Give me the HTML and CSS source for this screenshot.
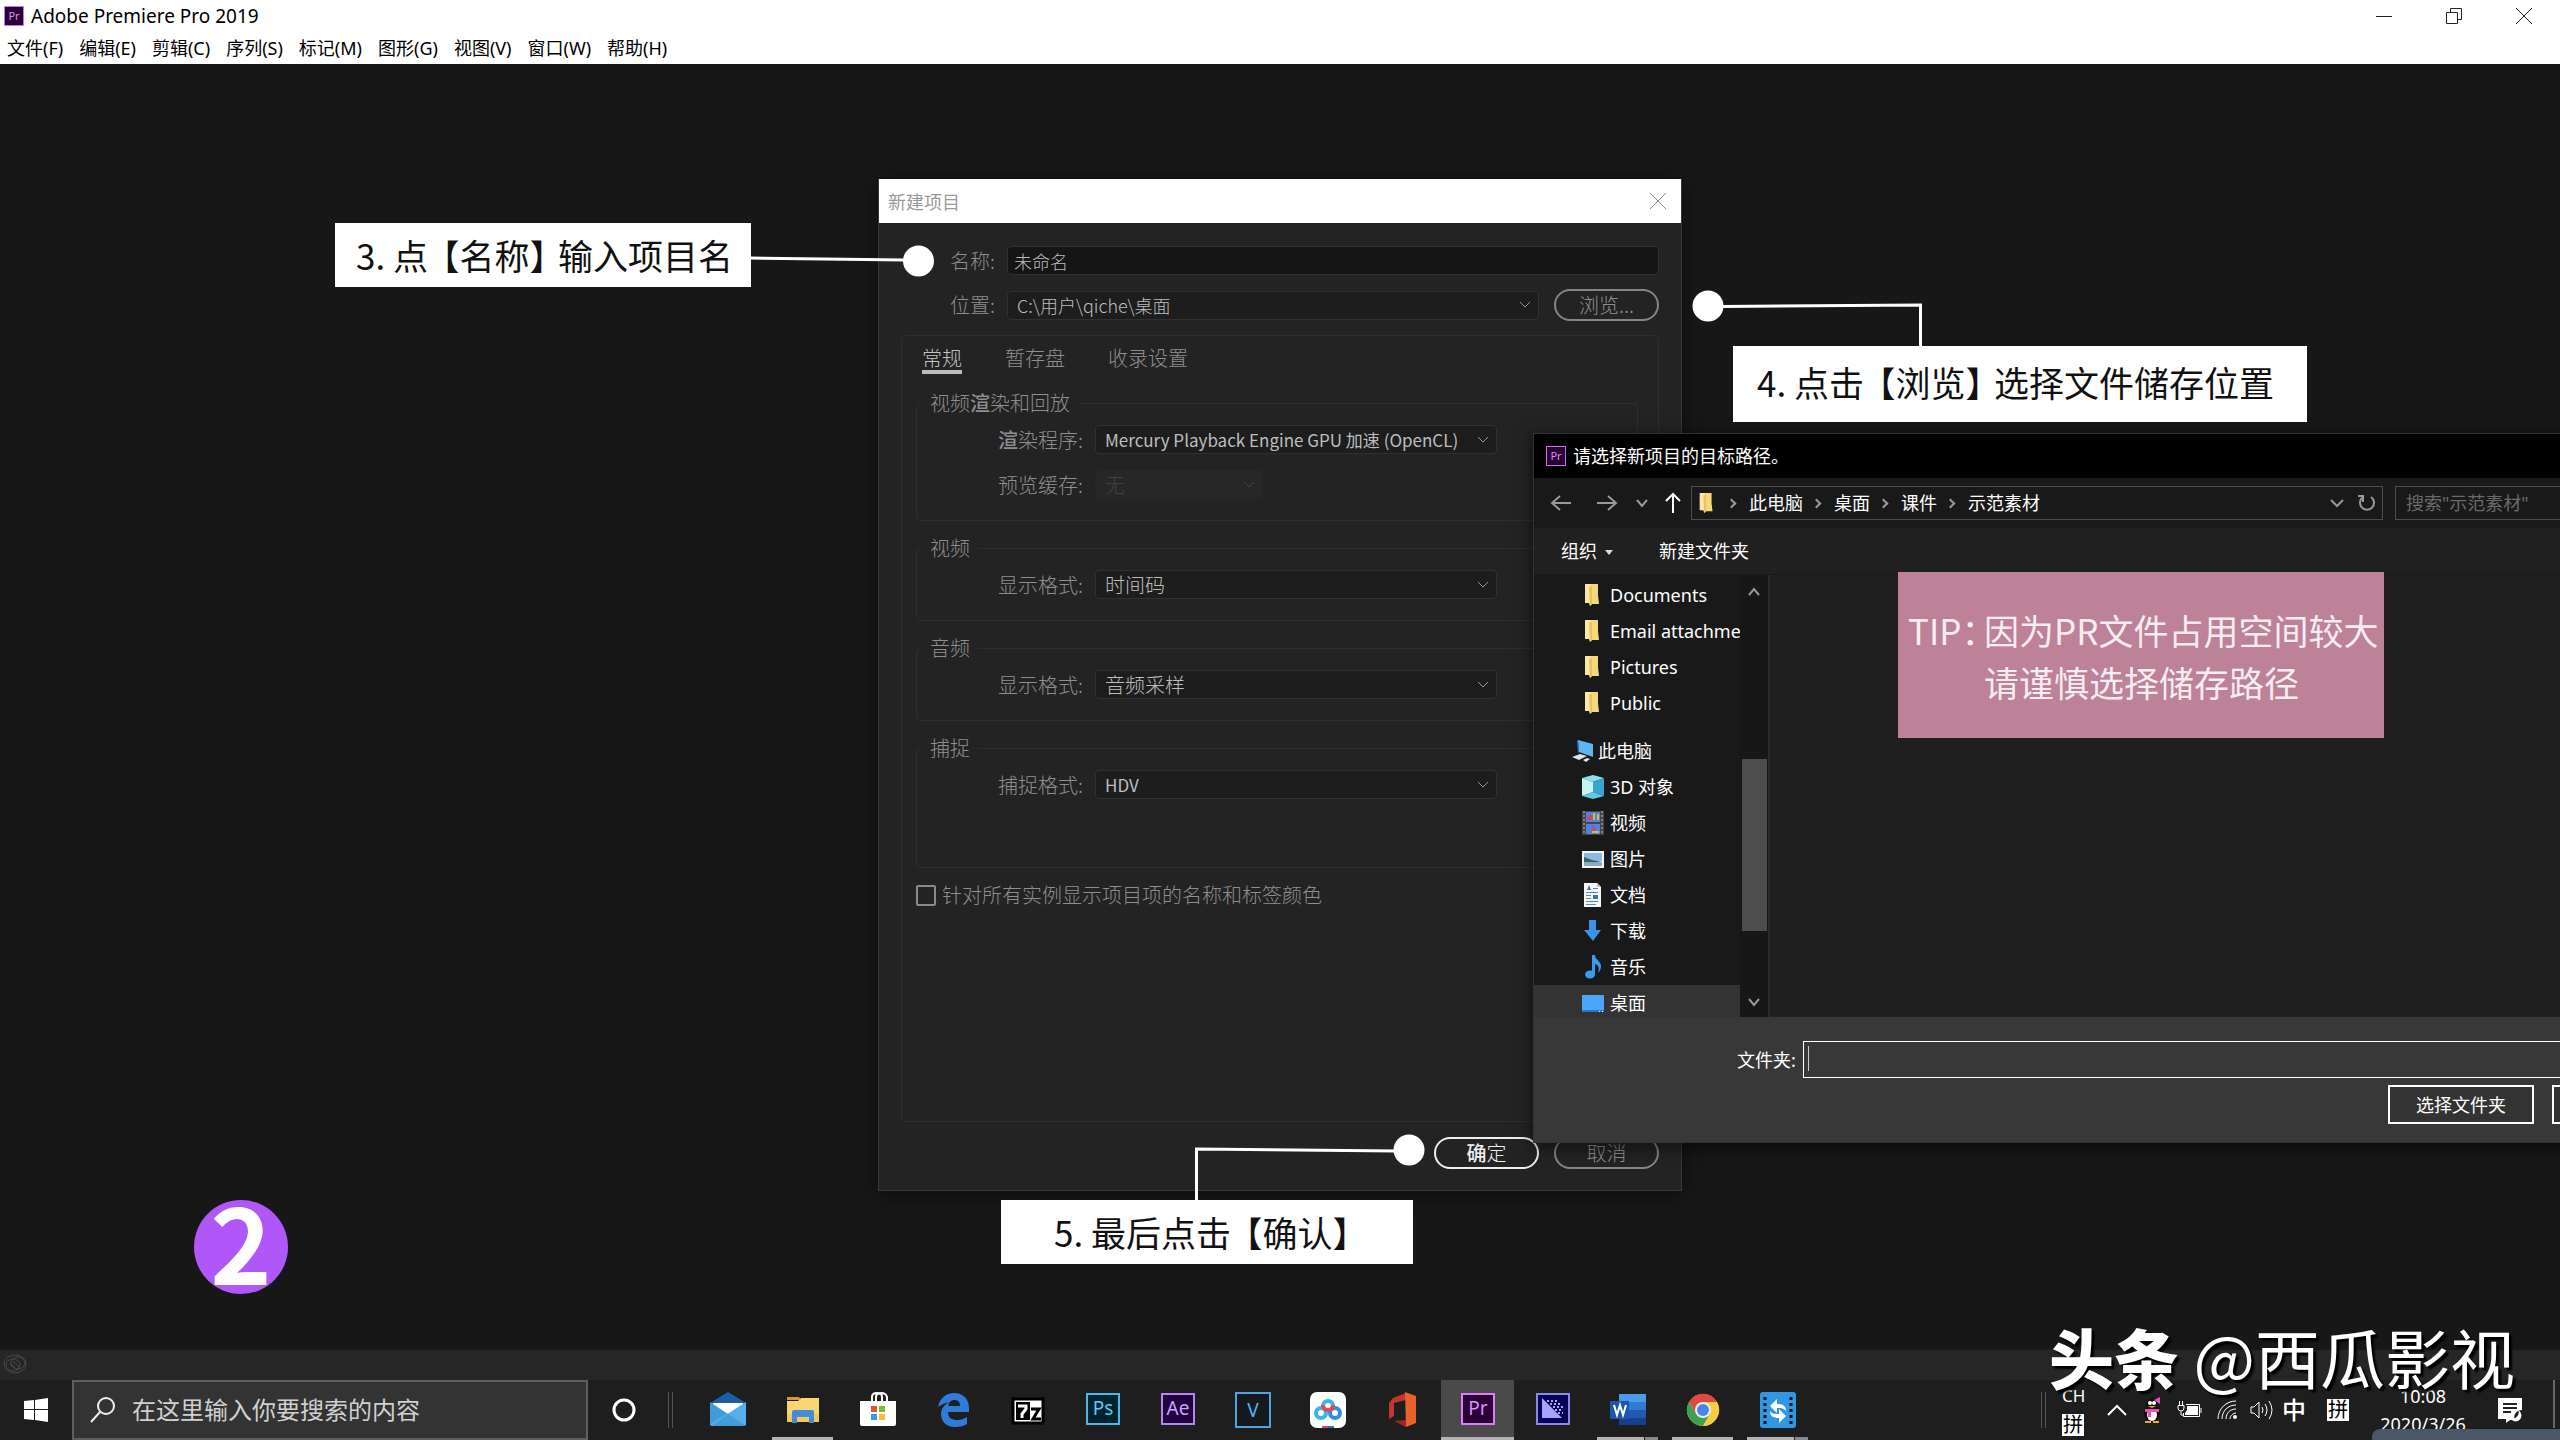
FILE: index.html
```html
<!DOCTYPE html>
<html lang="zh-CN">
<head>
<meta charset="utf-8">
<title>Adobe Premiere Pro 2019</title>
<link rel="stylesheet" href="styles.css">
</head>
<body>
<svg class="defs" width="0" height="0" aria-hidden="true">
  <defs>
    <symbol id="folder" viewBox="0 0 22 24"><g stroke="none"><path fill="#fbe8a6" d="M3 1h8v19l-3 3-1-3H3z"/><path fill="#e8c55c" d="M7 4l4-3v19l-3 3z"/><path fill="#f6d77c" d="M8 1h8v11l1 9H10V4z"/></g></symbol>
    <symbol id="pr" viewBox="0 0 20 20"><path fill="#2a0034" stroke="#c07be8" d="M.5.5h19v19H.5z"/><text x="10" y="14" text-anchor="middle" font-size="11" font-family="Noto Sans, sans-serif" fill="#d98cff">Pr</text></symbol>
  </defs>
</svg>
<div class="screen">
  <header class="titlebar">
    <svg class="app-icon" viewBox="0 0 20 20"><use href="#pr"/></svg>
    <h1>Adobe Premiere Pro 2019</h1>
    <div class="window-controls">
      <button aria-label="最小化"><svg viewBox="0 0 16 16"><path d="M0 8.500h16"/></svg></button>
      <button aria-label="还原"><svg viewBox="0 0 16 16"><path d="M.5 4.500h11v11H.5zM4.500 4V.5h11v11H12"/></svg></button>
      <button aria-label="关闭"><svg viewBox="0 0 16 16"><path d="M0 0l16 16M16 0L0 16"/></svg></button>
    </div>
  </header>
  <nav class="menubar">
    <button>文件(F)</button><button>编辑(E)</button><button>剪辑(C)</button><button>序列(S)</button><button>标记(M)</button><button>图形(G)</button><button>视图(V)</button><button>窗口(W)</button><button>帮助(H)</button>
  </nav>
  <main class="workspace"></main>
  <div class="statusbar">
    <svg width="26" height="20" viewBox="0 0 26 20"><g fill="none" stroke="#484848" stroke-width="1"><ellipse cx="12" cy="10" rx="11" ry="9"/><ellipse cx="10" cy="11" rx="7" ry="6"/><ellipse cx="15" cy="9" rx="7" ry="6"/><path d="M7 9l7 7M10 7l7 7"/></g></svg>
  </div>

  <section class="project-dialog">
    <div class="project-title"><h2>新建项目</h2>
      <button aria-label="关闭"><svg width="16" height="16" viewBox="0 0 16 16"><path d="M0 0l16 16M16 0L0 16"/></svg></button>
    </div>
    <form class="project-body">
      <div class="project-form">
        <label for="name">名称:</label><input id="name" class="name-input" type="text" value="未命名">
        <label for="location">位置:</label><select id="location"><option>C:\用户\qiche\桌面</option></select>
        <button type="button" class="pill">浏览...</button>
      </div>
      <div class="panel">
        <div class="tabs"><button type="button" class="active">常规</button><button type="button">暂存盘</button><button type="button">收录设置</button></div>
        <fieldset><legend>视频<b>渲</b>染和回放</legend>
          <div class="row"><label for="renderer"><b>渲</b>染程序:</label><select id="renderer" class="latin"><option>Mercury Playback Engine GPU 加速 (OpenCL)</option></select></div>
          <div class="row"><label for="cache">预览缓存:</label><select id="cache" class="short" disabled><option>无</option></select></div>
        </fieldset>
        <fieldset><legend>视频</legend>
          <div class="row"><label for="vfmt">显示格式:</label><select id="vfmt"><option>时间码</option></select></div>
        </fieldset>
        <fieldset><legend>音频</legend>
          <div class="row"><label for="afmt">显示格式:</label><select id="afmt"><option>音频采样</option></select></div>
        </fieldset>
        <fieldset class="tall"><legend>捕捉</legend>
          <div class="row"><label for="cfmt">捕捉格式:</label><select id="cfmt" class="latin"><option>HDV</option></select></div>
        </fieldset>
        <label class="check"><input type="checkbox"><span>针对所有实例显示项目项的名称和标签颜色</span></label>
      </div>
      <div class="project-footer"><button type="button" class="pill primary"><b>确</b>定</button><button type="button" class="pill">取消</button></div>
    </form>
  </section>

  <section class="file-dialog">
    <div class="file-title"><svg width="20" height="20"><use href="#pr"/></svg><h2>请选择新项目的目标路径。</h2></div>
    <div class="file-nav">
      <div class="arrows">
        <svg width="22" height="20" viewBox="0 0 22 20"><path d="M21 10H2M10 3l-8 7 8 7"/></svg>
        <svg width="22" height="20" viewBox="0 0 22 20"><path d="M1 10h19M12 3l8 7-8 7"/></svg>
        <svg width="12" height="20" viewBox="0 0 12 20"><path d="M1 7l5 6 5-6"/></svg>
        <svg class="up" width="18" height="22" viewBox="0 0 18 22"><path d="M9 21V2M2 9l7-7 7 7"/></svg>
      </div>
      <div class="address">
        <svg width="22" height="22"><use href="#folder"/></svg>
        <i class="sep"></i><a href="#pc">此电脑</a><i class="sep"></i><a href="#desktop">桌面</a><i class="sep"></i><a href="#class">课件</a><i class="sep"></i><a href="#demo">示范素材</a>
        <svg class="drop" width="14" height="10" viewBox="0 0 14 10"><path d="M1 2l6 6 6-6"/></svg>
        <svg class="refresh" width="18" height="20" viewBox="0 0 18 20"><path d="M13 4a7 7 0 1 1-8 0M5 9V3H0"/></svg>
      </div>
      <input class="file-search" type="text" aria-label="搜索" placeholder='搜索"示范素材"'>
    </div>
    <div class="file-tools"><button>组织<i class="caret"></i></button><button>新建文件夹</button></div>
    <div class="file-body">
      <ul class="tree">
        <li><svg><use href="#folder"/></svg>Documents</li>
        <li><svg><use href="#folder"/></svg>Email attachments</li>
        <li><svg><use href="#folder"/></svg>Pictures</li>
        <li><svg><use href="#folder"/></svg>Public</li>
        <li class="root"><svg viewBox="0 0 22 24"><path fill="#5fb4f5" d="M7 1l15 4v13L8 13z"/><path fill="#2f7fc8" d="M7 1l-1 1 1 12 1-1z"/><path fill="#dfe3e6" d="M1 18l8-3 7 2-8 4zM12 21l4-2 3 1-4 3z"/></svg>此电脑</li>
        <li><svg viewBox="0 0 22 24"><path fill="#8fdfee" d="M11 0l11 3-11 4L0 3z"/><path fill="#c8f3f5" d="M0 3l11 4v10L0 21z"/><path fill="#38a5cf" d="M22 3L11 7v10l11 4z"/><path fill="#63c9dd" d="M11 17L0 21l11 3 11-3z"/></svg>3D 对象</li>
        <li><svg viewBox="0 0 22 24"><path fill="#464646" d="M0 0h22v24H0z"/><path fill="#4f83dc" d="M4 1h14v10H4zM4 13h14v10H4z"/><path fill="#c7437a" d="M5 7l4-4 3 6H5zM11 14l3 5-5 2z"/><path fill="#e6b42e" d="M11 2h2v7h-2zM15 3h2v6h-2zM10 20h7v2h-7z"/><path stroke="#bbb" stroke-dasharray="2 2" d="M2 0v24M20 0v24"/></svg>视频</li>
        <li><svg viewBox="0 0 22 24"><path fill="#f2f5f7" d="M0 4h22v17H0z"/><path fill="#8db9e8" d="M2 6h18v8H2z"/><path fill="#2f6b58" d="M2 10l8 3 10 2v1H2z"/><path fill="#89aac0" d="M2 15h18v4H2z"/></svg>图片</li>
        <li><svg viewBox="0 0 22 24"><path fill="#f4f6f8" d="M2 0h13l4 4v20H2z"/><path fill="#bcc8d0" d="M15 0v4h4z"/><path stroke="#5d86aa" d="M4 9.500h12M4 12.500h5M4 15.500h5M4 18.500h12M4 21.500h10M11 5.500h5"/><path fill="#3578b0" d="M11 12h5v4h-5zM5 7l2-5 2 5z"/></svg>文档</li>
        <li><svg viewBox="0 0 22 24"><path fill="#3b92e8" d="M7 1h7v10h5l-8 11-9-11h5z"/></svg>下载</li>
        <li><svg viewBox="0 0 22 24"><ellipse cx="8" cy="19.500" rx="5" ry="4" fill="#3b9bf0"/><path fill="#3b9bf0" d="M10 0h3c0 5 6 6 6 11 0 3-1 5-3 7 2-6 0-8-3-9v11h-3z"/></svg>音乐</li>
        <li class="selected"><svg viewBox="0 0 22 24"><path fill="#4ba5fb" d="M0 4h22v17H0z"/><path fill="#2676cf" d="M0 19h22v2H0z"/><path stroke="#fff" d="M17 20.500h1M20 20.500h1"/></svg>桌面</li>
      </ul>
      <div class="scrollbar">
        <svg width="12" height="10" viewBox="0 0 12 10"><path d="M1 8l5-6 5 6"/></svg>
        <i class="thumb"></i>
        <svg width="12" height="10" viewBox="0 0 12 10"><path d="M1 2l5 6 5-6"/></svg>
      </div>
      <div class="files"></div>
    </div>
    <div class="file-footer">
      <div class="folder-row"><label for="folder-name">文件夹:</label><span class="folder-box"><input id="folder-name" type="text"></span></div>
      <div class="file-buttons"><button>选择文件夹</button><button aria-label="取消"></button></div>
    </div>
  </section>

  <svg class="connectors" width="100%" height="100%">
    <g fill="none" stroke="#fff" stroke-width="3"><path d="M750 258l155 2M1722 306.500l198.500-1.500V348M1196.500 1202v-53l200 2"/></g>
    <g fill="#fff"><circle cx="918.500" cy="261" r="15.500"/><circle cx="1708" cy="306" r="15.500"/><circle cx="1409" cy="1150" r="15.500"/></g>
  </svg>
  <p class="callout step-name">3. 点<span>【名称】</span>输入项目名</p>
  <p class="callout step-browse">4. 点击<span>【浏览】</span>选择文件储存位置</p>
  <p class="callout step-ok">5. 最后点击<span>【确认】</span></p>
  <div class="tip"><strong>TIP：</strong><p>因为PR文件占用空间较大<br>请谨慎选择储存路径</p></div>
  <div class="step-number">2</div>

  <footer class="taskbar">
    <button class="start" aria-label="开始"><svg width="24" height="24" viewBox="0 0 24 24"><path fill="#fff" d="M0 3l10-1v9H0zM11 2l13-2v11H11zM0 12h10v10L0 21zM11 12h13v12l-13-2z"/></svg></button>
    <label class="search"><svg width="26" height="26" viewBox="0 0 26 26"><g fill="none" stroke="#eee" stroke-width="2"><circle cx="16" cy="9" r="8"/><path d="M10 15L1 25"/></g></svg><input type="text" aria-label="搜索" placeholder="在这里输入你要搜索的内容"></label>
    <button class="cortana" aria-label="Cortana"><svg width="26" height="26" viewBox="0 0 26 26"><circle cx="13" cy="13" r="10" fill="none" stroke="#fff" stroke-width="3"/></svg></button>
    <i class="grip"></i>
    <div class="apps">
      <button aria-label="邮件"><svg viewBox="0 0 36 36"><path fill="#1d5ea8" d="M0 11L18 0l18 11v8H0z"/><path fill="#fff" d="M3 11h30v12H3z"/><path fill="#3f9bdc" d="M0 10l18 12 18-12v22a2 2 0 0 1-2 2H2a2 2 0 0 1-2-2z"/><path fill="#69c6f5" d="M36 10L0 32a2 2 0 0 0 2 2h20L36 33z" opacity=".5"/><path fill="#3187cf" d="M18 22l18 12H2z" opacity=".5"/></svg></button>
      <button class="open" aria-label="文件资源管理器"><svg viewBox="0 0 36 36"><path fill="#d99a2b" d="M2 5h12l2 3H2z"/><path fill="#f9d673" d="M2 9h11l3-3h18v24H2z"/><path fill="#f4c85b" d="M2 22h32v8H2z"/><path fill="#3f8ddb" d="M9 18h18q2 0 2 2v11h-5v-6H12v6H7V20q0-2 2-2z"/></svg></button>
      <button aria-label="商店"><svg viewBox="0 0 36 36"><path fill="none" stroke="#fff" stroke-width="2" d="M12 10V5q0-4 5-4t5 4v5M16 10V5q0-4 5-4t6 4v5"/><path fill="#fff" d="M0 9h36v23q0 2-2 2H2q-2 0-2-2z"/><path fill="#e65532" d="M11 14h6v6h-6z"/><path fill="#80bb2d" d="M19 14h6v6h-6z"/><path fill="#2f9fe8" d="M11 22h6v6h-6z"/><path fill="#fbbf30" d="M19 22h6v6h-6z"/></svg></button>
      <button aria-label="Edge"><svg viewBox="0 0 36 36"><path fill="#2f7bd8" d="M3 15C5 6 11 1 19 1c10 0 15 7 15 15v4H13c0 6 4 8 9 8 4 0 7-1 10-3v7c-3 2-7 3-12 3C11 35 6 29 6 22c0-5 3-9 8-12-5 1-8 3-11 5zm10-1h12c0-4-2-6-6-6-3 0-5 2-6 6z"/></svg></button>
      <button aria-label="7-Zip"><svg viewBox="0 0 36 36"><path fill="#fff" stroke="#000" stroke-width="3" d="M3 7h30v24H3z"/><path fill="#000" d="M6 10h14v18H6z"/><path fill="none" stroke="#fff" stroke-width="3" d="M8 14h8v3l-4 5v4"/><path fill="none" stroke="#000" stroke-width="3" d="M21 17h8l-6 10h8"/></svg></button>
      <button aria-label="Photoshop"><svg viewBox="0 0 36 36"><path fill="#02222e" stroke="#4db8e8" stroke-width="2" d="M2 2h32v30H2z"/><text x="18" y="23" class="logo" fill="#5ec8f5">Ps</text></svg></button>
      <button aria-label="After Effects"><svg viewBox="0 0 36 36"><path fill="#1f0040" stroke="#b388e8" stroke-width="2" d="M2 2h32v30H2z"/><text x="18" y="23" class="logo" fill="#cfa2ff">Ae</text></svg></button>
      <button aria-label="VEGAS"><svg viewBox="0 0 36 36"><path fill="#15181c" stroke="#4aa5e0" stroke-width="2" d="M1 1h34v34H1z"/><text x="18" y="25" class="logo" fill="#4fb6f2">V</text></svg></button>
      <button aria-label="网盘"><svg viewBox="0 0 36 36"><rect width="36" height="36" rx="7" fill="#fff"/><g fill="none" stroke-width="4"><circle cx="11" cy="21" r="5" stroke="#38b5e9"/><circle cx="25" cy="21" r="5" stroke="#2f8fe8"/><path stroke="#38b5e9" d="M13 14a5 5 0 0 1 10 0"/><path stroke="#e94560" d="M13 13a5 5 0 0 0 10 0"/></g><path fill="#e94560" d="M12 34h6v2h-6z"/><path fill="#3f66d8" d="M18 34h6v2h-6z"/></svg></button>
      <button aria-label="Office"><svg viewBox="0 0 36 36"><path fill="#c43530" d="M21 1L8 6 4 11v16l5-3V11l12-3z"/><path fill="#e9622b" d="M20 0l11 4v27l-10 4z"/><path fill="#a52420" d="M9 29l12-1v7z"/></svg></button>
      <button class="open active" aria-label="Premiere Pro"><svg viewBox="0 0 36 36"><path fill="#2a0034" stroke="#e07bff" stroke-width="2" d="M2 2h32v30H2z"/><text x="18" y="23" class="logo" fill="#dc8cff">Pr</text></svg></button>
      <button aria-label="Media Encoder"><svg viewBox="0 0 36 36"><path fill="#070355" stroke="#8c88e8" stroke-width="2" d="M2 2h32v30H2z"/><path fill="#a9a2ff" d="M7 6l20 20H7z"/><path stroke="#a9a2ff" stroke-width="2" stroke-dasharray="2 2" d="M12 9h12M15 12h12M18 15h10M20 18h8M23 21h5"/></svg></button>
      <button class="open multi" aria-label="Word"><svg viewBox="0 0 36 36"><path fill="#4a9be8" d="M9 2h27v8H9z"/><path fill="#2f7bd0" d="M9 10h27v8H9z"/><path fill="#2358b0" d="M9 18h27v8H9z"/><path fill="#173f8c" d="M9 26h27v7H9z"/><path fill="#1b55b0" d="M0 9h19v18H0z"/><path fill="none" stroke="#fff" stroke-width="2" d="M4 13l3 10 3-10 3 10 3-10"/></svg></button>
      <button class="open" aria-label="Chrome"><svg viewBox="0 0 36 36"><circle cx="18" cy="18" r="16" fill="#f6cb45"/><path fill="#df4a3d" d="M4 10a16 16 0 0 1 28 0H18l-7 12z"/><path fill="#3ea055" d="M4 10a16 16 0 0 0 14 24l7-12H11z"/><path fill="#f6cb45" d="M32 10a16 16 0 0 1-14 24l7-12V10z"/><circle cx="18" cy="18" r="8" fill="#eee"/><circle cx="18" cy="18" r="6" fill="#4a86e8"/></svg></button>
      <button class="open multi" aria-label="格式转换"><svg viewBox="0 0 36 36"><rect width="36" height="36" rx="3" fill="#3197e5"/><path stroke="#111" stroke-width="3" stroke-dasharray="3 3" d="M5 5v28M31 5v28"/><path fill="#fff" d="M17 7v5c6 0 9 2 9 7-2-3-5-3-9-3v5l-7-7zM19 31v-5c-6 0-9-2-9-7 2 3 5 3 9 3v-5l7 7z"/></svg></button>
    </div>
    <i class="grip tray-grip"></i>
    <div class="tray">
      <div class="lang"><span>CH</span><span class="ime">拼</span></div>
      <svg class="t-up" width="20" height="12" viewBox="0 0 20 12"><path d="M1 11l9-9 9 9"/></svg>
      <svg class="t-qq" width="20" height="26" viewBox="0 0 20 26"><ellipse cx="10" cy="16" rx="8" ry="8" fill="#080808"/><ellipse cx="10" cy="8" rx="6" ry="7" fill="#111"/><ellipse cx="10" cy="18" rx="5" ry="6" fill="#fff"/><path fill="#f04bc0" d="M3 12h14v3H9v5H6v-5H3zM12 3l6-3v7z"/><circle cx="8" cy="6" r="2" fill="#fff"/><circle cx="12" cy="6" r="2" fill="#fff"/><path fill="#f5a623" d="M6 9h8l-4 2zM3 24h6v2H3zM11 24h6v2h-6z"/></svg>
      <svg class="t-bat" width="25" height="20" viewBox="0 0 25 20"><path d="M9 4.500h13.500v12h-16V13M24 8v5M1 5.500h6V8q0 3-3 3T1 8zM2.500 5V1M5.500 5V1M4 11v4h2"/><path fill="#fff" stroke="none" d="M10 6h11v9H8v-2l2-3z"/></svg>
      <svg class="t-wifi" width="21" height="20" viewBox="0 0 21 20"><path d="M1 19C1 9 9 1 19 1M5 19C5 11 11 5 19 5M9 19c0-6 4-10 10-10M13 19c0-3 3-6 6-6"/><circle cx="18" cy="17" r="2" fill="#fff" stroke="none"/></svg>
      <svg class="t-vol" width="24" height="20" viewBox="0 0 24 20"><path d="M1 7h3l5-5v16l-5-5H1zM12 7q2 3 0 6M15 4q4 6 0 12M19 1q6 9 0 18"/></svg>
      <span class="zhong">中</span>
      <span class="ime t-ime">拼</span>
      <div class="clock"><span>10:08</span><span>2020/3/26</span></div>
      <svg class="t-note" width="26" height="26" viewBox="0 0 26 26"><path fill="#fff" stroke="none" d="M0 1h24v12a7 7 0 0 0-7 10h-5l-4 3v-4H0z"/><path stroke="#222" d="M5 7h14M5 11h14M5 15h8"/><path fill="#fff" stroke="none" d="M20 13a6 6 0 0 1-8 8 6 6 0 1 0 8-8z"/></svg>
    </div>
    <i class="show-desktop"></i>
  </footer>
  <div class="corner-panel"></div>
  <div class="watermark"><b>头条</b> @西瓜影视</div>
</div>
</body>
</html>
```
FILE: styles.css
```css
* { box-sizing: border-box; }
body {
  margin: 0;
  background: #171717;
  font-family: "Noto Sans", "Noto Sans CJK SC", sans-serif;
  font-size: 18px;
  line-height: 24px;
}
h1, h2, p, ul { margin: 0; padding: 0; font-size: inherit; font-weight: 400; }
button, input, select { font: inherit; color: inherit; border: 0; background: none; padding: 0; margin: 0; outline: 0; border-radius: 0; }
b { font-weight: 500; }
a { color: inherit; text-decoration: none; }
.defs { position: absolute; }
.screen { position: relative; display: flex; flex-direction: column; height: 100vh; overflow: hidden; }

/* application frame */
.titlebar { display: flex; align-items: center; height: 32px; padding-left: 4px; background: #fff; color: #000; }
.titlebar h1 { font-size: 19px; }
.app-icon { width: 20px; height: 20px; margin-right: 7px; }
.window-controls { display: flex; gap: 54px; margin-left: auto; padding-right: 28px; }
.window-controls button { width: 16px; height: 16px; line-height: 0; }
.window-controls svg { width: 16px; height: 16px; fill: none; stroke: #222; }
.menubar { display: flex; gap: 16px; height: 32px; padding: 4px 7px; background: #fff; color: #000; }
.menubar button { height: 24px; line-height: 24px; }
.workspace { flex: 1; background: #171717; }
.statusbar { height: 30px; padding: 4px 3px; background: #262626; line-height: 0; }

/* new project dialog */
.project-dialog { position: absolute; left: 878px; top: 179px; width: 804px; border: 1px solid #393939; border-top: 0; background: #232323; color: #8e8e8e; box-shadow: 0 4px 16px rgba(0, 0, 0, .5); font-family: "Noto Sans CJK SC", sans-serif; font-weight: 300; font-size: 20px; }
.project-title { display: flex; align-items: center; justify-content: space-between; height: 44px; padding: 0 15px 0 9px; background: #fff; color: #999; font-size: 18px; }
.project-title button { height: 16px; line-height: 0; }
.project-title svg { stroke: #888; }
.project-body { padding: 23px 22px 21px; }
.project-form { display: grid; grid-template-columns: 106px 1fr 105px; row-gap: 14px; align-items: center; }
.project-form > label { padding-right: 12px; text-align: right; }
.name-input { grid-column: 2 / 4; height: 29px; padding-left: 6px; border: 1px solid #303030; border-radius: 4px; background: #151515; color: #bdbdbd; font-size: 18px; }
.project-body select { appearance: none; height: 29px; padding: 0 9px; border: 1px solid #303030; border-radius: 4px; background: #1d1d1d url("data:image/svg+xml,%3Csvg xmlns='http://www.w3.org/2000/svg' width='12' height='8'%3E%3Cpath d='M1 1l5 5 5-5' fill='none' stroke='%23999'/%3E%3C/svg%3E") no-repeat right 7px center; color: #bdbdbd; line-height: 24px; }
.project-body #location { margin-right: 15px; font-size: 18px; }
.project-body .latin { font-size: 17px; font-weight: 400; }
.pill { width: 105px; height: 32px; border: 2px solid #858585; border-radius: 16px; line-height: 26px; }
.panel { margin-top: 14px; padding: 0 20px 214px 14px; border: 1px solid #2e2e2e; border-radius: 4px; }
.tabs { display: flex; gap: 43px; padding: 10px 6px 0; }
.tabs button { border-bottom: 4px solid transparent; }
.tabs .active { color: #c4c4c4; border-color: #bbb; }
fieldset { min-width: 0; margin: 19px 0 0; padding: 12px 0 21px; border: 1px solid #2e2e2e; border-radius: 4px; }
fieldset + fieldset { margin-top: 17px; }
legend { margin-left: 5px; padding: 0 8px; line-height: 20px; }
.row { display: grid; grid-template-columns: 178px 402px; align-items: center; }
.row + .row { margin-top: 16px; }
.row label { padding-right: 12px; text-align: right; }
.project-body .short { width: 168px; border-color: #262626; background-color: #272727; background-image: url("data:image/svg+xml,%3Csvg xmlns='http://www.w3.org/2000/svg' width='12' height='8'%3E%3Cpath d='M1 1l5 5 5-5' fill='none' stroke='%23444'/%3E%3C/svg%3E"); color: #414141; opacity: 1; }
.tall { padding-bottom: 68px; }
.check { display: flex; align-items: center; gap: 6px; margin-top: 15px; }
.check input { appearance: none; width: 20px; height: 21px; border: 2px solid #8a8a8a; border-radius: 2px; }
.project-footer { display: flex; justify-content: flex-end; gap: 15px; margin-top: 15px; }
.primary { border-color: #eee; color: #eee; }

/* folder picker */
.file-dialog { position: absolute; left: 1533px; top: 433px; width: 1280px; border: 1px solid #333; background: #1f1f1f; color: #fff; box-shadow: 0 4px 16px rgba(0, 0, 0, .6); }
.file-title { display: flex; align-items: center; gap: 7px; height: 44px; padding-left: 12px; background: #000; }
.file-nav { display: flex; align-items: center; height: 50px; background: #191919; }
.arrows { display: flex; align-items: center; gap: 18px; width: 157px; padding-left: 16px; }
.arrows svg, .address svg, .scrollbar svg { fill: none; stroke: #999; stroke-width: 2; }
.arrows svg:nth-child(2) { margin-left: 6px; }
.arrows .up { stroke: #fff; margin-left: -2px; }
.address { display: flex; align-items: center; width: 692px; height: 34px; padding: 0 6px 0 4px; border: 1px solid #4c4c4c; }
.sep { width: 7px; height: 7px; margin: 0 14px 0 10px; border: solid #999; border-width: 2px 2px 0 0; transform: rotate(45deg); }
.address .drop { margin-left: auto; }
.address .refresh { margin-left: 14px; }
.file-search { width: 400px; height: 34px; margin-left: 12px; padding-left: 10px; border: 1px solid #4c4c4c; }
.file-search::placeholder { color: #6a6a6a; opacity: 1; }
.file-tools { display: flex; align-items: center; gap: 46px; height: 47px; padding-left: 27px; border-bottom: 1px solid #191919; background: #202020; }
.caret { display: inline-block; margin: 0 0 3px 8px; border: 4px solid transparent; border-top: 5px solid #ddd; border-bottom: 0; }
.file-body { display: flex; height: 442px; }
.tree { width: 206px; padding-top: 2px; overflow: hidden; background: #191919; list-style: none; white-space: nowrap; }
.tree li { display: flex; align-items: center; gap: 6px; height: 36px; padding-left: 48px; overflow: hidden; }
.tree svg { flex: none; width: 22px; height: 24px; }
.tree .root { margin-top: 12px; padding-left: 37px; gap: 5px; }
.tree .selected { background: #333; }
.scrollbar { display: flex; flex-direction: column; justify-content: space-between; align-items: center; width: 30px; padding: 12px 0 10px; border-right: 2px solid #2b2b2b; background: #171717; }
.thumb { width: 25px; height: 172px; margin-top: 96px; background: #4d4d4d; }
.files { flex: 1; background: #1f1f1f; }
.file-footer { height: 125px; padding-top: 24px; background: #383838; }
.folder-row { display: flex; align-items: center; padding-left: 203px; }
.folder-box { flex: 1; height: 37px; margin-left: 7px; padding: 4px; border: 1px solid #fff; }
.folder-box input { display: block; width: 100%; height: 25px; border-left: 1px solid #ccc; }
.file-buttons { display: flex; gap: 18px; margin-top: 7px; padding-left: 854px; }
.file-buttons button { width: 146px; height: 39px; border: 2px solid #fff; background: #333; }

/* tutorial notes */
.connectors { position: absolute; left: 0; top: 0; pointer-events: none; }
.callout { position: absolute; display: flex; align-items: center; height: 64px; background: #fff; color: #111; font: 400 35px/40px "Noto Sans CJK SC", sans-serif; white-space: pre; }
.callout span { margin: 0 11px 0 14px; font-feature-settings: "halt"; }
.step-name { left: 335px; top: 223px; width: 416px; padding-left: 21px; }
.step-browse { left: 1733px; top: 346px; width: 574px; height: 76px; padding: 0 0 4px 24px; }
.step-ok { left: 1001px; top: 1200px; width: 412px; padding-left: 53px; }
.tip { position: absolute; left: 1898px; top: 572px; width: 486px; height: 166px; display: flex; padding: 32px 0 0 10px; background: #bd8198; color: #f5edf1; font: 400 35px/52px "Noto Sans CJK SC", sans-serif; white-space: nowrap; }
.tip strong { width: 76px; font-weight: 400; }
.step-number { position: absolute; left: 194px; top: 1200px; width: 94px; height: 94px; border-radius: 50%; background: #b057fa; color: #fff; font: 700 104px/80px "Noto Sans CJK SC", sans-serif; text-align: center; }

/* taskbar */
.taskbar { display: flex; align-items: center; height: 60px; background: #1e1e1e; color: #fff; }
.start { width: 72px; height: 60px; line-height: 0; }
.search { display: flex; align-items: center; gap: 16px; width: 516px; height: 60px; padding-left: 16px; border: 2px solid #5f5f5f; background: #333; }
.search input { flex: 1; font-size: 24px; line-height: 32px; }
.search input::placeholder { color: #d0d0d0; opacity: 1; }
.cortana { width: 72px; height: 60px; line-height: 0; }
.grip { width: 5px; height: 36px; margin-left: 8px; border: solid #555; border-width: 0 1px; }
.apps { display: flex; gap: 2px; margin-left: 18px; }
.apps button { display: flex; align-items: center; justify-content: center; width: 73px; height: 60px; background: no-repeat center bottom / 61px 3px; }
.apps svg { width: 36px; height: 36px; }
.apps .open { background-image: linear-gradient(#b5b2b2, #b5b2b2); }
.apps .multi { background-image: linear-gradient(90deg, #b5b2b2 47px, #222 47px, #222 48px, #888 48px); }
.apps .active { background-color: #4a4a4a; background-size: 73px 3px; }
.logo { font: 400 19px "Noto Sans", sans-serif; text-anchor: middle; }
.tray-grip { margin-left: auto; }
.tray { display: flex; align-items: center; width: 507px; height: 60px; padding-left: 16px; }
.tray > svg { flex: none; fill: none; stroke: #fff; stroke-width: 1; }
.tray .t-up, .tray .t-note { stroke-width: 2; }
.tray .t-qq { stroke: none; }
.lang { display: flex; flex-direction: column; gap: 7px; width: 22px; font-size: 17px; line-height: 22px; text-align: center; }
.ime { width: 22px; height: 22px; background: #fff; color: #000; font-size: 20px; line-height: 22px; text-align: center; }
.t-up { margin-left: 23px; }
.t-qq { margin-left: 15px; }
.t-bat { margin-left: 15px; }
.t-wifi { margin-left: 15px; }
.t-vol { margin-left: 12px; }
.zhong { margin-left: 8px; font-size: 24px; font-weight: 500; }
.t-ime { margin-left: 21px; }
.clock { display: flex; flex-direction: column; gap: 4px; width: 148px; font-size: 18px; text-align: center; }
.t-note { margin-left: 1px; }
.show-desktop { width: 7px; height: 48px; align-self: flex-start; border-left: 2px solid #666; }
.corner-panel { position: absolute; right: 0; bottom: 0; width: 188px; height: 11px; border-top-left-radius: 8px; background: #4b5667; }
.watermark { position: absolute; right: 45px; bottom: 44px; color: #fff; font: 400 65px/80px "Noto Sans CJK SC", sans-serif; text-shadow: 3px 3px 2px #000; white-space: nowrap; }
.watermark b { font-weight: 900; }
```
